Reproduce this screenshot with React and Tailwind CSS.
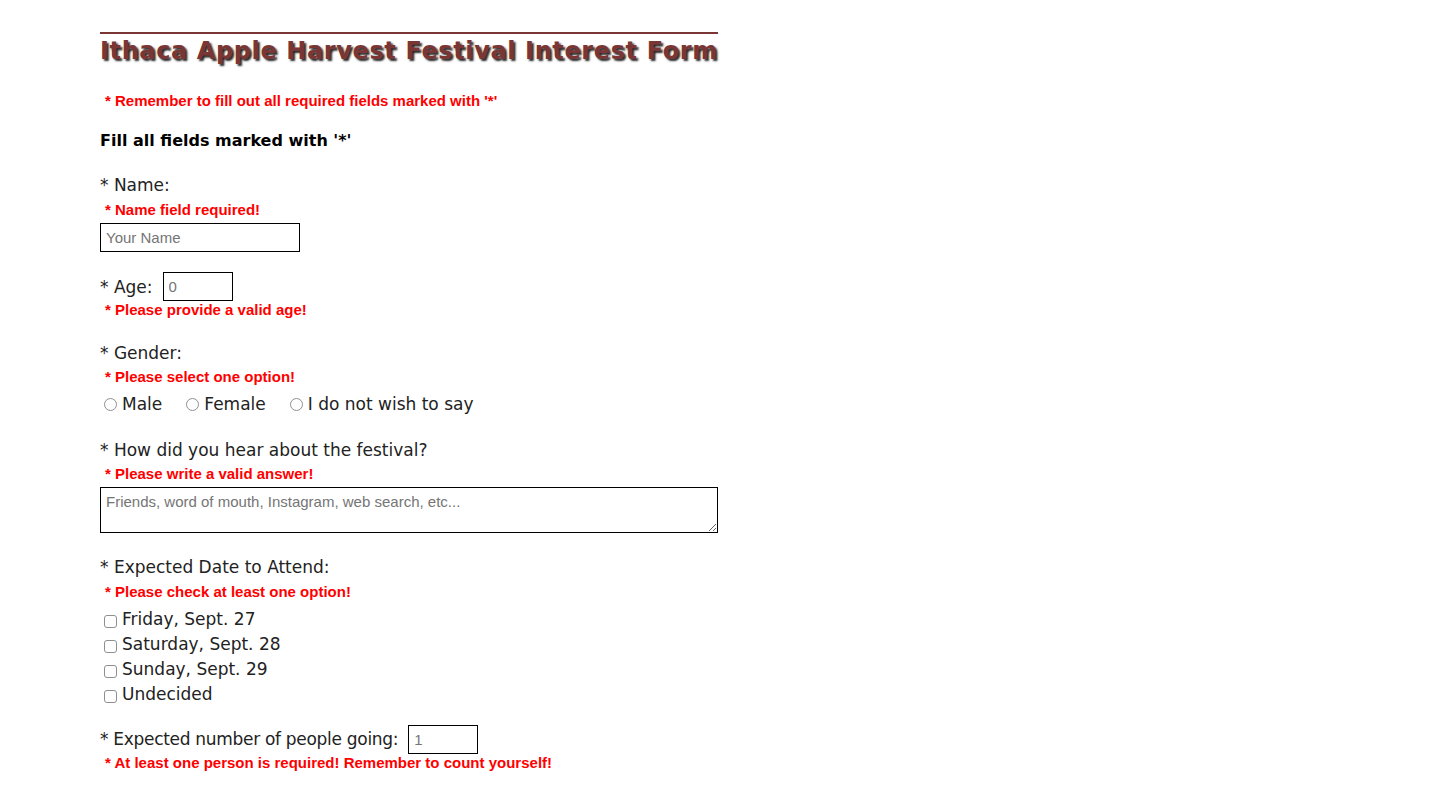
import React from "react";

const labelFont = "font-['DejaVu_Sans',sans-serif] text-[17px] text-[#222]";
const errFont = "font-['Liberation_Sans',Arial,sans-serif] text-[15px] font-bold text-[#ff0000]";
const inputCls =
  "border border-black bg-white px-[5px] font-['Liberation_Sans',Arial,sans-serif] text-[15px] text-black placeholder:text-[#757575] outline-none";

const Err = ({ children, className = "" }) => (
  <p className={`${errFont} pl-[5px] leading-[18px] ${className}`}>* {children}</p>
);

const Radio = ({ label }) => (
  <label className="flex items-center gap-[5px]">
    <span className="inline-block h-[13px] w-[13px] rounded-full border border-[#8f8f8f] bg-white" />
    <span className={labelFont}>{label}</span>
  </label>
);

const Check = ({ label }) => (
  <label className="flex h-[25px] items-center gap-[5px] pl-[4px]">
    <span className="mt-[2px] inline-block h-[13px] w-[13px] rounded-[3px] border border-[#8f8f8f] bg-white" />
    <span className={labelFont}>{label}</span>
  </label>
);

const App = () => {
  return (
    <div className="min-h-screen bg-white pl-[100px] pt-[32px]">
      <div className="w-[618px]">
        <h1 className="border-t-2 border-[#7a3535] pt-[2px] font-['DejaVu_Sans',Verdana,sans-serif] text-[24px] font-bold leading-[30px] tracking-[0.62px] text-[#7a3535] [text-shadow:2px_2px_2px_rgba(0,0,0,0.85)] whitespace-nowrap">
          Ithaca Apple Harvest Festival Interest Form
        </h1>

        <Err className="mt-[26px]">Remember to fill out all required fields marked with '*'</Err>

        <h2 className="mt-[21px] font-['DejaVu_Sans',Verdana,sans-serif] text-[16px] font-bold leading-[20px] text-black">
          Fill all fields marked with '*'
        </h2>

        {/* Name */}
        <div className="mt-[23px]">
          <p className={`${labelFont} leading-[22px]`}>* Name:</p>
          <Err className="mt-[5px]">Name field required!</Err>
          <input type="text" placeholder="Your Name" className={`${inputCls} mt-[4px] h-[29px] w-[200px]`} />
        </div>

        {/* Age */}
        <div className="mt-[20px]">
          <div className="flex items-center gap-[10px]">
            <span className={`${labelFont} leading-[22px]`}>* Age:</span>
            <input type="text" placeholder="0" className={`${inputCls} h-[29px] w-[70px]`} />
          </div>
          <Err>Please provide a valid age!</Err>
        </div>

        {/* Gender */}
        <div className="mt-[23px]">
          <p className={`${labelFont} leading-[22px]`}>* Gender:</p>
          <Err className="mt-[4px]">Please select one option!</Err>
          <div className="mt-[6px] flex items-center gap-[24px] pl-[4px]">
            <Radio label="Male" />
            <Radio label="Female" />
            <Radio label="I do not wish to say" />
          </div>
        </div>

        {/* Hear about */}
        <div className="mt-[21px]">
          <p className={`${labelFont} leading-[22px]`}>* How did you hear about the festival?</p>
          <Err className="mt-[4px]">Please write a valid answer!</Err>
          <textarea
            placeholder="Friends, word of mouth, Instagram, web search, etc..."
            className={`${inputCls} mt-[4px] block h-[46px] w-[618px] py-[3px]`}
          />
        </div>

        {/* Dates */}
        <div className="mt-[23px]">
          <p className={`${labelFont} leading-[22px]`}>* Expected Date to Attend:</p>
          <Err className="mt-[5px]">Please check at least one option!</Err>
          <div className="mt-[7px] flex flex-col">
            <Check label="Friday, Sept. 27" />
            <Check label="Saturday, Sept. 28" />
            <Check label="Sunday, Sept. 29" />
            <Check label="Undecided" />
          </div>
        </div>

        {/* People */}
        <div className="mt-[17px]">
          <div className="flex items-center gap-[10px]">
            <span className={`${labelFont} leading-[22px] tracking-[-0.3px]`}>* Expected number of people going:</span>
            <input type="text" placeholder="1" className={`${inputCls} h-[29px] w-[70px]`} />
          </div>
          <Err>At least one person is required! Remember to count yourself!</Err>
        </div>
      </div>
    </div>
  );
};

export default App;
